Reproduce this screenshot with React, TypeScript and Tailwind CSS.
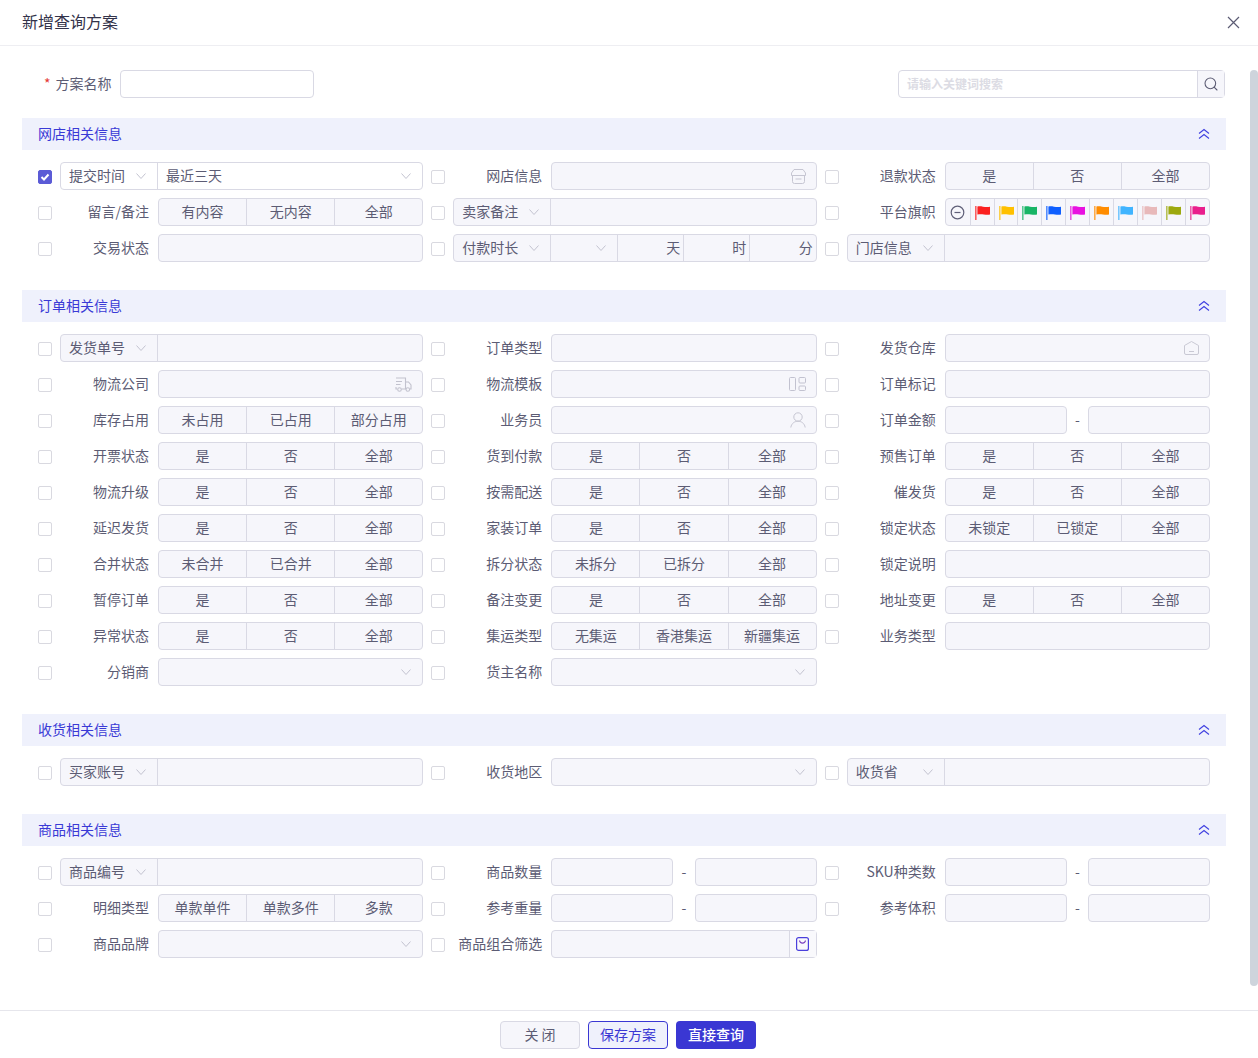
import { ReactNode } from 'react'
import { Search } from 'lucide-react'

type Field = {
  label?: string
  prefix?: string
  seg?: string[]
  select?: boolean
  value?: string
  icon?: ReactNode
  range?: boolean
  flags?: boolean
  duration?: boolean
  bag?: boolean
  checked?: boolean
}

const box = 'border border-[#d9d9e4] bg-[#f6f6fb]'
const flagColors = ['#fb2020', '#ffc000', '#18b566', '#0f5fff', '#e810e0', '#ff8c00', '#40b4ff', '#e8b9ba', '#9da90f', '#e91e8c']

function Chevron() {
  return (
    <svg width="10" height="10" viewBox="0 0 10 10" fill="none" stroke="#c4c4d0" strokeWidth="1" className="shrink-0">
      <path d="M0.5 2.5 L5 7.5 L9.5 2.5" />
    </svg>
  )
}

function DoubleUp() {
  return (
    <svg width="12" height="12" viewBox="0 0 12 12" fill="none" stroke="#3f3fe0" strokeWidth="1.1">
      <path d="M1 5.5 L6 1.5 L11 5.5" />
      <path d="M1 10.5 L6 6.5 L11 10.5" />
    </svg>
  )
}

function Flag({ color }: { color: string }) {
  return (
    <svg width="15" height="15" viewBox="0 0 15 15">
      <rect x="0" y="1" width="1.6" height="14" fill={color} opacity="0.7" />
      <path d="M2.4 1.5 C6 0.5 9 2.6 15 1.8 V9.6 C10 10.4 7 8.4 2.4 9.6 Z" fill={color} />
    </svg>
  )
}

function ShopIcon() {
  return (
    <svg width="15" height="15" viewBox="0 0 15 15" fill="none" stroke="#c6c6d2" strokeWidth="1">
      <path d="M3 0.5 H12 L14.5 4 V6.5 H0.5 V4 Z" />
      <path d="M1.5 6.5 V12.5 Q1.5 14.5 3.5 14.5 H11.5 Q13.5 14.5 13.5 12.5 V6.5" />
      <path d="M4.5 10 H10.5" />
    </svg>
  )
}

function HouseIcon() {
  return (
    <svg width="15" height="14" viewBox="0 0 15 14" fill="none" stroke="#c9c9d4" strokeWidth="1">
      <path d="M0.5 4.5 L7.5 0.5 L14.5 4.5 V12 Q14.5 13.5 13 13.5 H2 Q0.5 13.5 0.5 12 Z" />
      <path d="M5 10.5 H10" />
    </svg>
  )
}

function TruckIcon() {
  return (
    <svg width="17" height="15" viewBox="0 0 17 15" fill="none" stroke="#c2c2ce" strokeWidth="1.1">
      <path d="M1 1 H10.5 V12 H6.5" />
      <path d="M10.5 5 H13.5 L16 8 V12 H15" />
      <path d="M1 4.5 H7 M1 7.5 H5.5 M1 10 V12 H2" />
      <circle cx="4.5" cy="12.5" r="1.8" />
      <circle cx="12.8" cy="12.5" r="1.8" />
    </svg>
  )
}

function LayoutIcon() {
  return (
    <svg width="17" height="14" viewBox="0 0 17 14" fill="none" stroke="#c2c2d0" strokeWidth="1">
      <rect x="0.5" y="0.5" width="6" height="13" rx="1" />
      <rect x="10" y="0.5" width="6.5" height="5.5" rx="1" />
      <rect x="10" y="9" width="6.5" height="4.5" rx="1" />
    </svg>
  )
}

function UserIcon() {
  return (
    <svg width="16" height="16" viewBox="0 0 16 16" fill="none" stroke="#c6c6d2" strokeWidth="1">
      <circle cx="8" cy="5" r="4.2" />
      <path d="M0.8 15.5 C1.5 11 5 9.2 8 9.2 C11 9.2 14.5 11 15.2 15.5" />
    </svg>
  )
}

function BagIcon() {
  return (
    <svg width="13" height="14" viewBox="0 0 13 14" fill="none" strokeWidth="1.2">
      <rect x="0.6" y="0.6" width="11.8" height="12.8" rx="2" stroke="#4a3fdc" />
      <path d="M3.5 3.5 C4 7 9 7 9.5 3.5" stroke="#7a3fc0" />
    </svg>
  )
}

function Check({ on }: { on?: boolean }) {
  return (
    <span
      className={`mt-[2px] flex h-[14px] w-[14px] shrink-0 items-center justify-center rounded-[2px] border ${
        on ? 'border-[#5b5bd6] bg-[#5b5bd6]' : 'border-[#d9d9e0] bg-white'
      }`}
    >
      {on && (
        <svg width="10" height="10" viewBox="0 0 10 10" fill="none" stroke="white" strokeWidth="2">
          <path d="M1.5 5 L4 7.5 L8.5 2.5" />
        </svg>
      )}
    </span>
  )
}

function Segments({ items }: { items: string[] }) {
  return (
    <div className={`flex h-7 min-w-0 flex-1 rounded-[4px] ${box}`}>
      {items.map((t, i) => (
        <div key={t} className={`flex flex-1 items-center justify-center pb-[2px] ${i > 0 ? 'border-l border-[#d9d9e4]' : ''}`}>
          {t}
        </div>
      ))}
    </div>
  )
}

function Control({ f }: { f: Field }) {
  if (f.seg) return <Segments items={f.seg} />
  if (f.flags) {
    return (
      <div className={`flex h-7 min-w-0 flex-1 rounded-[4px] ${box}`}>
        <div className="flex w-[24px] items-center justify-center">
          <svg width="15" height="15" viewBox="0 0 15 15" fill="none" stroke="#5f5f78" strokeWidth="1.2">
            <circle cx="7.5" cy="7.5" r="6.3" />
            <path d="M4.5 7.5 H10.5" />
          </svg>
        </div>
        {flagColors.map((c) => (
          <div key={c} className="flex w-[24px] items-center justify-center border-l border-[#d9d9e4]">
            <Flag color={c} />
          </div>
        ))}
      </div>
    )
  }
  if (f.range) {
    return (
      <div className="flex min-w-0 flex-1 items-center">
        <div className={`h-7 flex-1 rounded-[4px] ${box}`} />
        <span className="w-[21.5px] pb-[2px] text-center">-</span>
        <div className={`h-7 flex-1 rounded-[4px] ${box}`} />
      </div>
    )
  }
  if (f.bag) {
    return (
      <div className={`flex h-7 min-w-0 flex-1 rounded-[4px] ${box}`}>
        <div className="flex-1" />
        <div className="flex w-[27px] items-center justify-center border-l border-[#d9d9e4] bg-[#f9f9fc]">
          <BagIcon />
        </div>
      </div>
    )
  }
  return (
    <div className={`flex h-7 min-w-0 flex-1 items-center justify-between rounded-[4px] pl-2 ${f.select ? 'pr-[11px]' : 'pr-[10px]'} ${box}`}>
      <span>{f.value}</span>
      {f.select && <Chevron />}
      {f.icon}
    </div>
  )
}

function Row({ f }: { f: Field }) {
  return (
    <div className="flex h-7 items-center text-sm text-[#5c5c74]">
      <Check on={f.checked} />
      {f.duration ? (
        <div className={`ml-2 flex h-7 flex-1 rounded-[4px] ${box}`}>
          <div className="flex w-[96px] items-center justify-between pl-2 pr-[11px]">
            <span className="pb-[2px]">{f.prefix}</span>
            <Chevron />
          </div>
          <div className="flex w-[67px] items-center justify-end border-l border-[#d9d9e4] pr-[11px]">
            <Chevron />
          </div>
          <div className="flex w-[66px] items-center justify-end border-l border-[#d9d9e4] pb-[2px] pr-[3px]">天</div>
          <div className="flex w-[66px] items-center justify-end border-l border-[#d9d9e4] pb-[2px] pr-[3px]">时</div>
          <div className="flex flex-1 items-center justify-end border-l border-[#d9d9e4] pb-[2px] pr-[3px]">分</div>
        </div>
      ) : f.prefix ? (
        <div className={`ml-2 flex h-7 flex-1 rounded-[4px] ${f.value ? 'border border-[#d9d9e4] bg-white' : box}`}>
          <div className="flex w-[96px] shrink-0 items-center justify-between pl-2 pr-[11px]">
            <span className="pb-[2px]">{f.prefix}</span>
            <Chevron />
          </div>
          <div className="flex flex-1 items-center justify-between border-l border-[#d9d9e4] pl-2 pr-[11px]">
            <span className="pb-[2px]">{f.value}</span>
            {f.select && <Chevron />}
          </div>
        </div>
      ) : (
        <>
          <label className="ml-2 mr-[9px] w-[89px] shrink-0 whitespace-nowrap pb-[2px] text-right">{f.label}</label>
          <Control f={f} />
        </>
      )}
    </div>
  )
}

const yesNo = ['是', '否', '全部']

const shop: Field[] = [
  { prefix: '提交时间', value: '最近三天', select: true, checked: true },
  { label: '网店信息', icon: <ShopIcon /> },
  { label: '退款状态', seg: yesNo },
  { label: '留言/备注', seg: ['有内容', '无内容', '全部'] },
  { prefix: '卖家备注' },
  { label: '平台旗帜', flags: true },
  { label: '交易状态' },
  { prefix: '付款时长', duration: true },
  { prefix: '门店信息' },
]

const order: Field[] = [
  { prefix: '发货单号' },
  { label: '订单类型' },
  { label: '发货仓库', icon: <HouseIcon /> },
  { label: '物流公司', icon: <TruckIcon /> },
  { label: '物流模板', icon: <LayoutIcon /> },
  { label: '订单标记' },
  { label: '库存占用', seg: ['未占用', '已占用', '部分占用'] },
  { label: '业务员', icon: <UserIcon /> },
  { label: '订单金额', range: true },
  { label: '开票状态', seg: yesNo },
  { label: '货到付款', seg: yesNo },
  { label: '预售订单', seg: yesNo },
  { label: '物流升级', seg: yesNo },
  { label: '按需配送', seg: yesNo },
  { label: '催发货', seg: yesNo },
  { label: '延迟发货', seg: yesNo },
  { label: '家装订单', seg: yesNo },
  { label: '锁定状态', seg: ['未锁定', '已锁定', '全部'] },
  { label: '合并状态', seg: ['未合并', '已合并', '全部'] },
  { label: '拆分状态', seg: ['未拆分', '已拆分', '全部'] },
  { label: '锁定说明' },
  { label: '暂停订单', seg: yesNo },
  { label: '备注变更', seg: yesNo },
  { label: '地址变更', seg: yesNo },
  { label: '异常状态', seg: yesNo },
  { label: '集运类型', seg: ['无集运', '香港集运', '新疆集运'] },
  { label: '业务类型' },
  { label: '分销商', select: true },
  { label: '货主名称', select: true },
]

const receive: Field[] = [
  { prefix: '买家账号' },
  { label: '收货地区', select: true },
  { prefix: '收货省' },
]

const goods: Field[] = [
  { prefix: '商品编号' },
  { label: '商品数量', range: true },
  { label: 'SKU种类数', range: true },
  { label: '明细类型', seg: ['单款单件', '单款多件', '多款'] },
  { label: '参考重量', range: true },
  { label: '参考体积', range: true },
  { label: '商品品牌', select: true },
  { label: '商品组合筛选', bag: true },
]

function Section({ title, fields }: { title: string; fields: Field[] }) {
  return (
    <section className="mt-5 [&+section]:mt-7">
      <div className="flex h-8 items-center justify-between bg-[#eff1fc] pl-4 pr-4 text-sm text-[#3a3ad6]">
        <span className="pb-[2px]">{title}</span>
        <DoubleUp />
      </div>
      <div className="grid grid-cols-3 gap-x-2 gap-y-2 px-4 pt-3">
        {fields.map((f, i) => (
          <Row key={i} f={f} />
        ))}
      </div>
    </section>
  )
}

export default function App() {
  return (
    <div
      className="relative flex h-[1058px] w-[1258px] flex-col overflow-hidden bg-white"
      style={{ fontFamily: '"Noto Sans CJK SC", "Noto Sans", sans-serif' }}
    >
      <header className="flex h-[46px] shrink-0 items-center justify-between border-b border-[#eeeef2] pl-[22px] pr-[18px]">
        <h1 className="pb-[4px] text-base text-[#33334a]">新增查询方案</h1>
        <svg width="13" height="13" viewBox="0 0 13 13" fill="none" stroke="#5c5c74" strokeWidth="1.2">
          <path d="M1 1 L12 12 M12 1 L1 12" />
        </svg>
      </header>

      <main className="flex-1 pl-[22px] pr-[32px] pt-6">
        <div className="flex h-7 items-center justify-between text-sm text-[#5c5c74]">
          <div className="flex items-center">
            <span className="ml-[22px] mr-[5px] pb-[2px] text-[#e53935]">*</span>
            <span className="pb-[2px]">方案名称</span>
            <div className="ml-2 h-7 w-[194px] rounded-[4px] border border-[#d9d9e4] bg-white" />
          </div>
          <div className="mr-px flex h-7 w-[327px] rounded-[4px] border border-[#d9d9e4]">
            <div className="flex flex-1 items-center pl-2 text-xs font-semibold text-[#dcdce4]">请输入关键词搜索</div>
            <div className="flex w-[27px] items-center justify-center border-l border-[#d9d9e4] bg-[#f6f6fb]">
              <Search size={16} strokeWidth={1.6} color="#5c5c74" />
            </div>
          </div>
        </div>
        <Section title="网店相关信息" fields={shop} />
        <Section title="订单相关信息" fields={order} />
        <Section title="收货相关信息" fields={receive} />
        <Section title="商品相关信息" fields={goods} />
      </main>

      <footer className="flex h-[48px] shrink-0 items-center justify-center gap-2 border-t border-[#e6e6ec] pr-[2px] text-sm">
        <button className="h-7 w-20 rounded-[4px] border border-[#d9d9e4] bg-[#f6f6fb] pb-[2px] text-[#5c5c74]">关 闭</button>
        <button className="h-7 w-20 rounded-[4px] border border-[#3a37d3] bg-[#eff1fc] pb-[2px] text-[#3a37d3]">保存方案</button>
        <button className="h-7 w-20 rounded-[4px] bg-[#3a37d3] pb-[2px] font-medium text-white">直接查询</button>
      </footer>

      {/* scrollbar thumb */}
      <div className="absolute left-[1250px] top-[70px] h-[916px] w-[8px] rounded-[4px] bg-[#ced4dc]" />
    </div>
  )
}
